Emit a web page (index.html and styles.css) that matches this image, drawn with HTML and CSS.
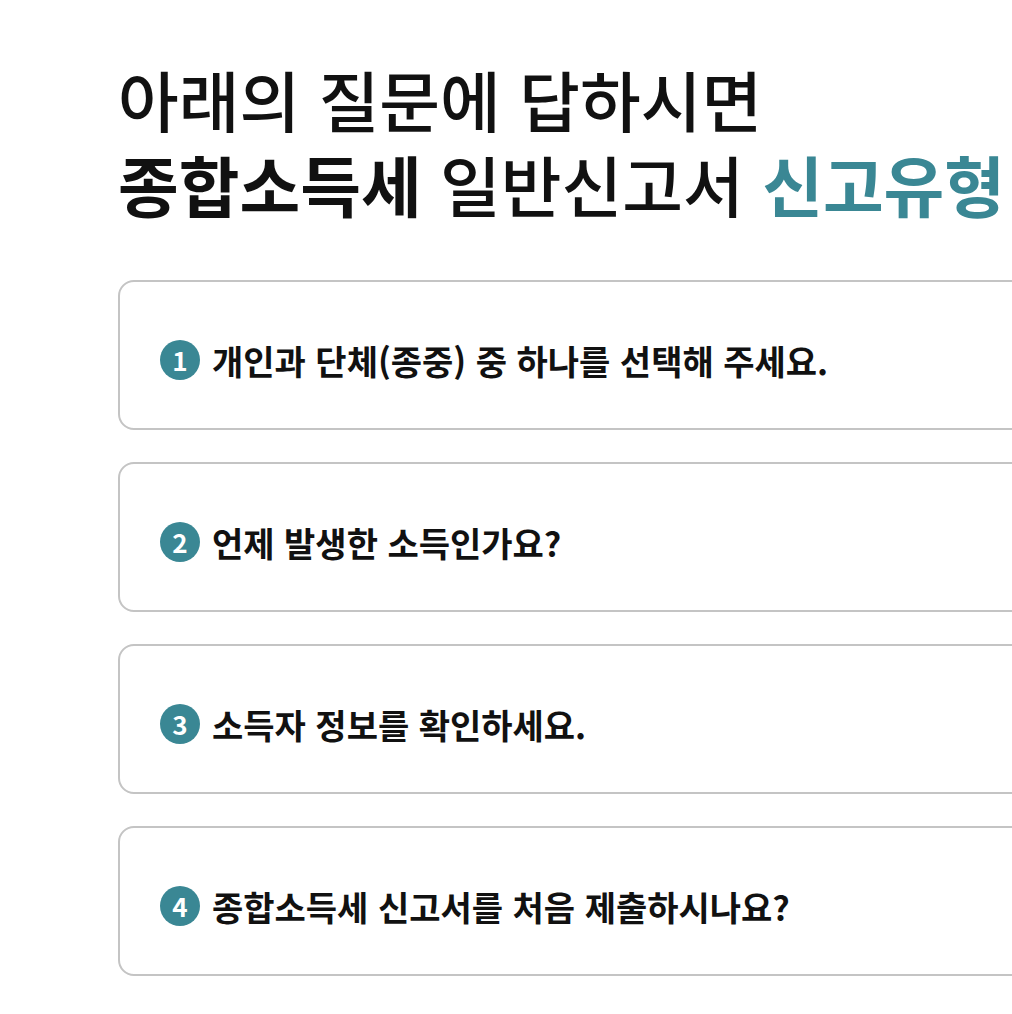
FILE: index.html
```html
<!DOCTYPE html>
<html lang="ko">
<head>
<meta charset="utf-8">
<link rel="stylesheet" href="styles.css">
</head>
<body>
<main class="page">
  <h1 class="title">
    <span class="line">아래의 질문에 답하시면</span>
    <span class="line"><strong>종합소득세</strong> 일반신고서 <strong class="accent">신고유형</strong></span>
  </h1>
  <ol class="steps">
    <li class="card"><span class="num">1</span><span class="q">개인과 단체(종중) 중 하나를 선택해 주세요.</span></li>
    <li class="card"><span class="num">2</span><span class="q">언제 발생한 소득인가요?</span></li>
    <li class="card"><span class="num">3</span><span class="q">소득자 정보를 확인하세요.</span></li>
    <li class="card"><span class="num">4</span><span class="q">종합소득세 신고서를 처음 제출하시나요?</span></li>
  </ol>
</main>
</body>
</html>
```
FILE: styles.css
```css
html, body {
  margin: 0;
  padding: 0;
  background: #fff;
  overflow: hidden;
}
body {
  font-family: "Noto Sans CJK KR", "Noto Sans", sans-serif;
  color: #111;
}
.page {
  padding: 50px 0 0 118px;
  width: 1100px;
}
.title {
  margin: 0;
  font-size: 66px;
  font-weight: 500;
  letter-spacing: 0;
  display: flex;
  flex-direction: column;
  gap: 0;
}
.title .line {
  display: block;
  height: 85px;
  line-height: 96px;
  white-space: nowrap;
  overflow: visible;
}
.title strong {
  font-weight: 700;
}
.title .accent {
  color: #3a8794;
}
.steps {
  list-style: none;
  margin: 60px 0 0;
  padding: 0;
  display: flex;
  flex-direction: column;
  gap: 32px;
}
.card {
  box-sizing: border-box;
  height: 150px;
  border: 2px solid #c4c4c4;
  border-radius: 16px;
  display: flex;
  align-items: center;
  padding: 10px 0 0 40px;
  gap: 12px;
}
.num {
  width: 40px;
  height: 40px;
  border-radius: 50%;
  background: #3a8794;
  color: #fff;
  font-size: 26px;
  font-weight: 700;
  display: flex;
  align-items: center;
  justify-content: center;
  line-height: 1;
  flex: none;
}
.q {
  font-size: 34px;
  font-weight: 700;
  white-space: nowrap;
}
```
